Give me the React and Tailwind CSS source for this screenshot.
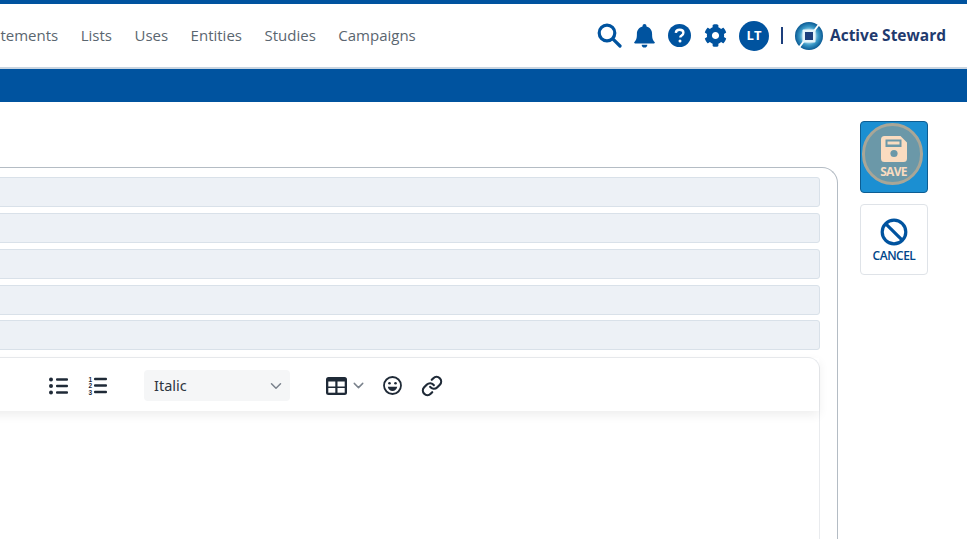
import React from 'react';
import { ChevronDown, Link } from 'lucide-react';

const navItems = ['Statements', 'Lists', 'Uses', 'Entities', 'Studies', 'Campaigns'];

function SearchIcon() {
  return (
    <svg width="25" height="25" viewBox="0 0 25 25" fill="none" stroke="#00539f" strokeWidth="3.2">
      <circle cx="10" cy="10" r="7.8" />
      <path d="M15.8 15.8 23 23" strokeLinecap="round" />
    </svg>
  );
}

function BellIcon() {
  return (
    <svg width="21" height="24" viewBox="0 0 21 24" fill="#00539f">
      <path d="M10.5 0a2 2 0 0 1 2 2v.6c3.6.8 5.6 3.8 5.6 7.3 0 5 1 6.4 2.5 8 .5.6.2 1.6-.7 1.6H1.100c-.9 0-1.200-1-.7-1.600 1.500-1.600 2.500-3 2.500-8 0-3.500 2-6.500 5.600-7.300V2a2 2 0 0 1 2-2z" />
      <path d="M7.700 20.800h5.600a2.800 2.800 0 0 1-5.600 0z" />
    </svg>
  );
}

function HelpIcon() {
  return (
    <svg width="23" height="23" viewBox="0 0 23 23">
      <circle cx="11.500" cy="11.500" r="11.500" fill="#00539f" />
      <path d="M7.800 8.800c.2-2 1.700-3.100 3.800-3.100 2.200 0 3.800 1.200 3.800 3 0 1.400-.8 2.100-1.800 2.800-.9.600-1.300 1-1.300 2" fill="none" stroke="#fff" strokeWidth="2.400" />
      <circle cx="12" cy="17" r="1.500" fill="#fff" />
    </svg>
  );
}

function GearIcon() {
  return (
    <svg width="23" height="23" viewBox="0 0 512 512" fill="#00539f">
      <path d="M487.400 315.700l-42.600-24.600c4.300-23.200 4.300-47 0-70.200l42.600-24.600c4.900-2.800 7.100-8.600 5.500-14-11.100-35.600-30-67.800-54.700-94.600-3.800-4.100-10-5.100-14.800-2.300L380.800 110c-17.900-15.400-38.500-27.300-60.800-35.100V25.800c0-5.600-3.900-10.500-9.400-11.700-36.700-8.200-74.300-7.800-109.200 0-5.500 1.200-9.400 6.100-9.400 11.700V75c-22.200 7.900-42.800 19.800-60.800 35.100L88.700 85.500c-4.900-2.800-11-1.900-14.800 2.300-24.700 26.700-43.600 58.900-54.700 94.600-1.700 5.400.6 11.200 5.500 14L67.300 221c-4.300 23.200-4.300 47 0 70.200l-42.600 24.600c-4.900 2.800-7.100 8.600-5.500 14 11.100 35.600 30 67.800 54.700 94.600 3.800 4.100 10 5.100 14.800 2.300l42.600-24.600c17.900 15.400 38.500 27.300 60.800 35.100v49.200c0 5.600 3.900 10.500 9.400 11.700 36.700 8.200 74.300 7.800 109.200 0 5.500-1.200 9.400-6.100 9.400-11.700v-49.200c22.200-7.900 42.800-19.800 60.800-35.100l42.600 24.600c4.900 2.800 11 1.900 14.800-2.300 24.700-26.700 43.600-58.900 54.700-94.600 1.500-5.500-.7-11.300-5.600-14.100zM256 336c-44.100 0-80-35.900-80-80s35.900-80 80-80 80 35.900 80 80-35.900 80-80 80z" />
    </svg>
  );
}

function SteMark() {
  return (
    <svg width="28" height="28" viewBox="0 0 28 28">
      <defs>
        <radialGradient id="ring" cx="50%" cy="50%" r="50%">
          <stop offset="35%" stopColor="#cfeaf4" />
          <stop offset="65%" stopColor="#3b9ac8" />
          <stop offset="100%" stopColor="#0a5a94" />
        </radialGradient>
      </defs>
      <circle cx="14" cy="14" r="14" fill="url(#ring)" />
      <path d="M19 9 25 1" stroke="#fff" strokeWidth="1.800" />
      <path d="M9 19 3 27" stroke="#fff" strokeWidth="1.800" />
      <rect x="7.500" y="7.500" width="13" height="13" rx="1" fill="#e6f5fa" />
      <rect x="10" y="10" width="8" height="8" fill="#1d3f7c" />
    </svg>
  );
}

function FloppyIcon() {
  return (
    <svg width="26" height="26" viewBox="0 0 26 26">
      <path d="M3.500 0h16L26 6.500v16a3.500 3.500 0 0 1-3.500 3.500h-19A3.500 3.500 0 0 1 0 22.500v-19A3.500 3.500 0 0 1 3.500 0z" fill="#fadcc0" />
      <rect x="4.500" y="3.500" width="16" height="7.500" fill="#6b98a8" />
      <rect x="6.500" y="5.500" width="12" height="3" fill="#fadcc0" />
      <circle cx="13" cy="17.500" r="3.600" fill="#6b98a8" />
    </svg>
  );
}

function BulletListIcon() {
  return (
    <svg width="19" height="18" viewBox="0 0 19 18" fill="#1f2a37">
      <circle cx="2" cy="2.500" r="2" />
      <circle cx="2" cy="9" r="2" />
      <circle cx="2" cy="15.500" r="2" />
      <rect x="7" y="1.300" width="12" height="2.400" rx="1" />
      <rect x="7" y="7.800" width="12" height="2.400" rx="1" />
      <rect x="7" y="14.300" width="12" height="2.400" rx="1" />
    </svg>
  );
}

function NumberListIcon() {
  return (
    <svg width="19" height="19" viewBox="0 0 19 19" fill="#1f2a37">
      <text x="0.500" y="5.500" fontSize="6.500" fontWeight="700" fontFamily="'Liberation Sans', sans-serif">1</text>
      <text x="0.500" y="12" fontSize="6.500" fontWeight="700" fontFamily="'Liberation Sans', sans-serif">2</text>
      <text x="0.500" y="18.500" fontSize="6.500" fontWeight="700" fontFamily="'Liberation Sans', sans-serif">3</text>
      <rect x="6" y="1.800" width="13" height="2.400" rx="1" />
      <rect x="6" y="8.300" width="13" height="2.400" rx="1" />
      <rect x="6" y="14.800" width="13" height="2.400" rx="1" />
    </svg>
  );
}

function TableIcon() {
  return (
    <svg width="21" height="18" viewBox="0 0 21 18">
      <rect x="0" y="0" width="21" height="18" rx="2.500" fill="#1f2a37" />
      <rect x="2.300" y="4.500" width="7" height="5" fill="#fff" />
      <rect x="11.500" y="4.500" width="7.200" height="5" fill="#fff" />
      <rect x="2.300" y="11" width="7" height="4.700" fill="#fff" />
      <rect x="11.500" y="11" width="7.200" height="4.700" fill="#fff" />
    </svg>
  );
}

function SmileIcon() {
  return (
    <svg width="19" height="19" viewBox="0 0 19 19">
      <circle cx="9.500" cy="9.500" r="8.500" fill="none" stroke="#1f2a37" strokeWidth="1.800" />
      <circle cx="6.500" cy="7.300" r="1.300" fill="#1f2a37" />
      <circle cx="12.500" cy="7.300" r="1.300" fill="#1f2a37" />
      <path d="M4.800 10.800h9.400c-.4 2.600-2.300 4.200-4.700 4.200s-4.300-1.600-4.700-4.200z" fill="#1f2a37" />
    </svg>
  );
}

function Field() {
  return <div className="h-[30px] rounded-[3px] border border-[#d9e1e9] bg-[#edf1f6]" />;
}

export default function App() {
  return (
    <div className="h-[539px] w-[967px] overflow-hidden bg-white font-['Open_Sans',sans-serif]">
      <header className="flex h-[69px] items-center justify-between border-t-4 border-b-2 border-t-[#00539f] border-b-[#c9d5e1] bg-white pr-[21px]">
        <nav className="-ml-[21.500px] flex items-center gap-[22.500px] text-[15px] text-[#5a6670]">
          {navItems.map((item) => (
            <span key={item}>{item}</span>
          ))}
        </nav>
        <div className="flex items-center">
          <SearchIcon />
          <span className="ml-[12px]"><BellIcon /></span>
          <span className="ml-[13px]"><HelpIcon /></span>
          <span className="ml-[13px]"><GearIcon /></span>
          <span className="ml-[12px] flex h-[30px] w-[30px] items-center justify-center rounded-full bg-[#00539f] text-[13px] font-bold text-white">LT</span>
          <span className="ml-[12px] h-[17px] w-[2px] bg-[#1d3f7c]" />
          <span className="ml-[12px]"><SteMark /></span>
          <span className="ml-[7px] text-[15.500px] font-bold text-[#1f3a6e]">Active Steward</span>
        </div>
      </header>
      <div className="h-[33px] bg-[#00539f]" />

      <div className="flex items-start">
        <main className="mt-[65px] -ml-[40px] h-[400px] w-[878px] rounded-tr-[16px] border-t border-r border-[#b4bcc4] pt-[9px] pr-[17px] pl-[10px]">
          <div className="flex flex-col gap-[6px]">
            <Field />
            <Field />
            <Field />
            <Field />
            <div className="-mt-[1px]"><Field /></div>
          </div>
          <div className="mt-[7px] h-[300px] rounded-t-[12px] border border-b-0 border-[#e9ebee]">
            <div className="flex h-[53px] items-center pt-[2px] pl-[78px] shadow-[0_4px_10px_rgba(0,0,0,0.07)]">
              <BulletListIcon />
              <span className="ml-[20px]"><NumberListIcon /></span>
              <div className="ml-[37px] flex h-[31px] w-[146px] items-center justify-between rounded-[4px] bg-[#f5f6f7] pt-[1px] pr-[5px] pl-[10px] font-['Noto_Sans',sans-serif] text-[14.500px] text-[#2d3540]">
                Italic
                <ChevronDown size={18} color="#7a828c" />
              </div>
              <span className="ml-[36px]"><TableIcon /></span>
              <ChevronDown size={17} color="#7a828c" className="ml-[3px]" />
              <span className="ml-[16px]"><SmileIcon /></span>
              <Link size={22} strokeWidth={2.4} color="#1f2a37" className="ml-[19px]" />
            </div>
          </div>
        </main>

        <aside className="mt-[19px] ml-[22px] flex w-[68px] flex-col gap-[11px]">
          <button className="flex h-[72px] items-start justify-center rounded-[4px] border border-[#0d5d92] bg-[#1b8fd2] pt-[1px] pr-[4px]">
            <span className="flex h-[62px] w-[61px] flex-col items-center rounded-full border-[3px] border-[#a9a697] bg-[#6b98a8] pt-[10px] pl-[3px] text-[12px] leading-[14px] font-bold tracking-[-0.7px] text-[#fadcc0]">
              <FloppyIcon />
              <span className="mt-[3px]">SAVE</span>
            </span>
          </button>
          <button className="flex h-[71px] flex-col items-center justify-center rounded-[4px] border border-[#dfe3e8] bg-white pt-[1px] text-[12px] leading-[14px] font-semibold tracking-[-0.5px] text-[#00468a]">
            <svg width="28" height="28" viewBox="0 0 28 28" fill="none" stroke="#00539f" strokeWidth="3.200">
              <circle cx="14" cy="14" r="11.800" />
              <path d="M5.800 5.800 22.200 22.200" />
            </svg>
            <span className="mt-[3px]">CANCEL</span>
          </button>
        </aside>
      </div>
    </div>
  );
}
